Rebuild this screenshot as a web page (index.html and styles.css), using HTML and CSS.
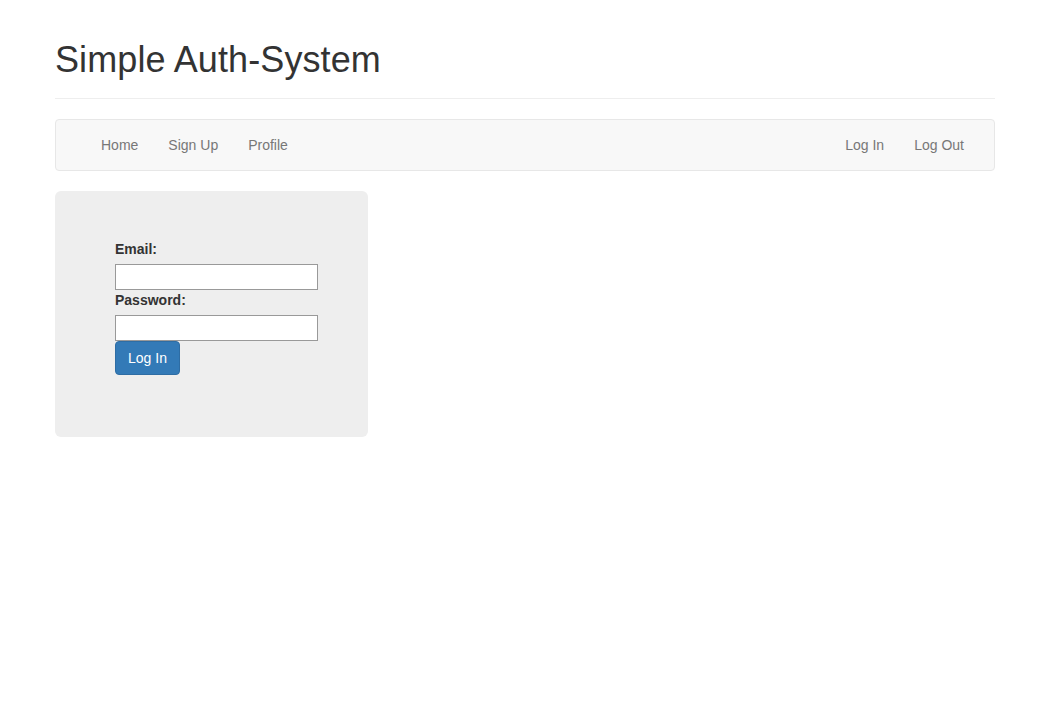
FILE: index.html
```html
<!DOCTYPE html>
<html lang="en">
<head>
<meta charset="utf-8">
<title>Simple Auth-System</title>
<link rel="stylesheet" href="styles.css">
</head>
<body>
<div class="container">
  <div class="page-header">
    <h1>Simple Auth-System</h1>
  </div>
  <nav class="navbar">
    <ul class="nav nav-left">
      <li><a href="#">Home</a></li>
      <li><a href="#">Sign Up</a></li>
      <li><a href="#">Profile</a></li>
    </ul>
    <ul class="nav nav-right">
      <li><a href="#">Log In</a></li>
      <li><a href="#">Log Out</a></li>
    </ul>
  </nav>
  <div class="jumbotron">
    <form class="login-form">
      <label for="email">Email:</label>
      <input id="email" type="text" class="field">
      <label for="password">Password:</label>
      <input id="password" type="password" class="field">
      <button type="submit" class="btn">Log In</button>
    </form>
  </div>
</div>
</body>
</html>
```
FILE: styles.css
```css
* { box-sizing: border-box; }
html, body { margin: 0; padding: 0; }
body {
  font-family: "Liberation Sans", Arial, sans-serif;
  font-size: 14px;
  line-height: 20px;
  color: #333;
  background: #fff;
}
.container {
  width: 940px;
  margin: 0 auto;
}
.page-header {
  margin: 40px 0 20px;
  padding-bottom: 9px;
  border-bottom: 1px solid #eee;
}
.page-header h1 {
  margin: 0 0 10px;
  font-size: 36px;
  font-weight: 500;
  line-height: 39px;
  letter-spacing: 0.1px;
  color: #333;
}
.navbar {
  display: flex;
  justify-content: space-between;
  align-items: center;
  height: 52px;
  padding: 0 15px;
  margin-bottom: 20px;
  background: #f8f8f8;
  border: 1px solid #e7e7e7;
  border-radius: 4px;
}
.nav {
  display: flex;
  list-style: none;
  margin: 0;
  padding: 0;
}
.nav-left { padding-left: 15px; }
.nav a {
  display: block;
  padding: 15px;
  line-height: 20px;
  color: #777;
  text-decoration: none;
}
.jumbotron {
  width: 313px;
  height: 246px;
  padding: 48px 60px;
  background: #eee;
  border-radius: 6px;
}
.login-form {
  display: flex;
  flex-direction: column;
  align-items: flex-start;
}
.login-form label {
  font-weight: 700;
  line-height: 20px;
  margin-bottom: 5px;
}
.field {
  width: 203px;
  height: 26px;
  margin: 0;
  padding: 1px 2px;
  border: 1px solid #999;
  background: #fff;
  font: 14px "Liberation Sans", Arial, sans-serif;
}
.btn {
  height: 34px;
  padding: 6px 12px;
  font: 14px/20px "Liberation Sans", Arial, sans-serif;
  color: #fff;
  background: #337ab7;
  border: 1px solid #2e6da4;
  border-radius: 4px;
  cursor: pointer;
}
```
